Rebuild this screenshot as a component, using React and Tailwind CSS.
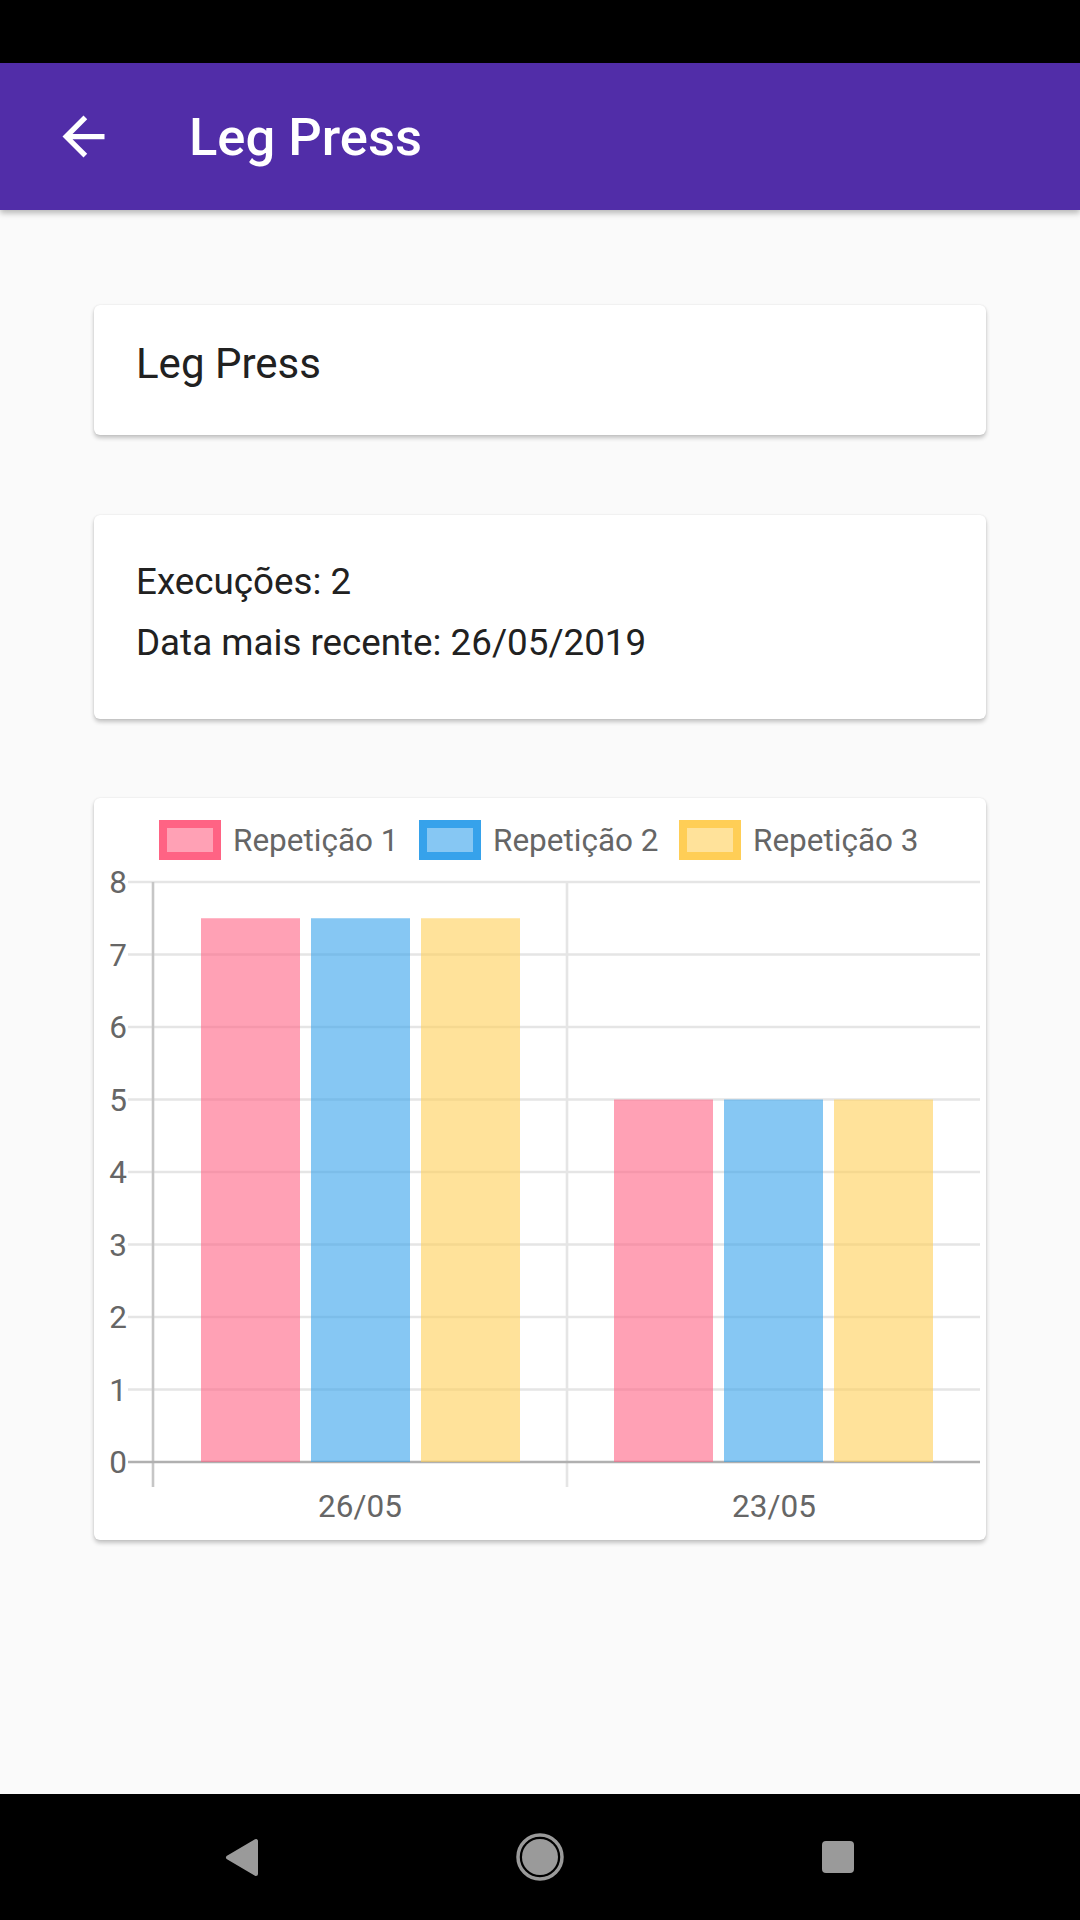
export default function App() {
  const toY = (v) => 664 - 72.5 * v;
  const groups = [
    { label: "26/05", value: 7.5, xs: [107, 217, 327], cx: 266 },
    { label: "23/05", value: 5, xs: [520, 630, 740], cx: 680 },
  ];
  const fills = ["rgba(255,99,132,0.6)", "rgba(54,162,235,0.6)", "rgba(255,206,86,0.6)"];
  const strokes = ["rgb(255,99,132)", "rgb(54,162,235)", "rgb(255,206,86)"];
  const legend = [
    { bx: 69, tx: 139, name: "Repetição 1" },
    { bx: 329, tx: 399, name: "Repetição 2" },
    { bx: 589, tx: 659, name: "Repetição 3" },
  ];
  return (
    <div className="w-[1080px] h-[1920px] flex flex-col bg-[#fafafa] overflow-hidden font-['Roboto','Noto_Sans',sans-serif]">
      <div className="h-[63px] shrink-0 bg-black" />
      <header className="relative z-10 h-[147px] shrink-0 bg-[#512da8] flex items-center shadow-[0_3px_6px_rgba(0,0,0,0.28)]">
        <svg className="ml-[52px] w-[63px] h-[63px]" viewBox="0 0 24 24">
          <path fill="#ffffff" d="M20 11H7.83l5.59-5.59L12 4l-8 8 8 8 1.41-1.41L7.83 13H20v-2z" />
        </svg>
        <h1 className="ml-[74px] text-[52.5px] font-medium text-white leading-[62px]">Leg Press</h1>
      </header>

      <main className="flex-1 flex flex-col px-[94px] pt-[95px]">
        <div className="bg-white rounded-[6px] shadow-[0_3px_4px_rgba(0,0,0,0.22),0_0_2px_rgba(0,0,0,0.1)] pl-[42px] pt-[34px] pb-[47px]">
          <p className="text-[42px] leading-[49px] text-[#212121]">Leg Press</p>
        </div>

        <div className="mt-[80px] bg-white rounded-[6px] shadow-[0_3px_4px_rgba(0,0,0,0.22),0_0_2px_rgba(0,0,0,0.1)] pl-[42px] pt-[45px] pb-[55px] flex flex-col gap-[18px]">
          <p className="text-[36.75px] leading-[43px] text-[#212121]">Execuções: 2</p>
          <p className="text-[36.75px] leading-[43px] text-[#212121]">Data mais recente: 26/05/2019</p>
        </div>

        <div className="mt-[79px] h-[742px] bg-white rounded-[6px] shadow-[0_3px_4px_rgba(0,0,0,0.22),0_0_2px_rgba(0,0,0,0.1)] overflow-hidden">
          <svg width="892" height="742" viewBox="0 0 892 742" className="block">
            {legend.map((l, i) => (
              <g key={l.name}>
                <rect x={l.bx} y={26} width={54} height={32} fill={fills[i]} stroke={strokes[i]} strokeWidth={8} />
                <text x={l.tx} y={53} fontSize="31.5" fill="#666666" fontFamily="Roboto, sans-serif">{l.name}</text>
              </g>
            ))}
            {[1, 2, 3, 4, 5, 6, 7, 8].map((v) => (
              <line key={v} x1={34} x2={886} y1={toY(v)} y2={toY(v)} stroke="#e5e5e5" strokeWidth={2.6} />
            ))}
            <line x1={59} x2={59} y1={84} y2={689} stroke="#c6c6c6" strokeWidth={2.6} />
            <line x1={473} x2={473} y1={84} y2={689} stroke="#e5e5e5" strokeWidth={2.6} />
            <line x1={34} x2={886} y1={664} y2={664} stroke="#b0b0b0" strokeWidth={2.6} />
            {[0, 1, 2, 3, 4, 5, 6, 7, 8].map((v) => (
              <text key={v} x={33} y={toY(v) + 11} fontSize="31.5" fill="#666666" textAnchor="end" fontFamily="Roboto, sans-serif">{v}</text>
            ))}
            {groups.map((g) =>
              g.xs.map((x, i) => (
                <rect key={g.label + i} x={x} y={toY(g.value)} width={99} height={72.5 * g.value} fill={fills[i]} />
              ))
            )}
            {groups.map((g) => (
              <text key={g.label} x={g.cx} y={719} fontSize="31.5" fill="#666666" textAnchor="middle" fontFamily="Roboto, sans-serif">{g.label}</text>
            ))}
          </svg>
        </div>
      </main>

      <nav className="h-[126px] shrink-0 bg-black flex items-center justify-center gap-[178px]">
        <div className="w-[120px] flex justify-center">
          <svg width="35" height="39" viewBox="0 0 35 39">
            <path d="M3 19.5 L31 3 L31 36 Z" fill="#9a9a9a" stroke="#9a9a9a" strokeWidth="4" strokeLinejoin="round" />
          </svg>
        </div>
        <div className="w-[120px] flex justify-center">
          <svg width="48" height="48" viewBox="0 0 48 48">
            <circle cx="24" cy="24" r="22" fill="none" stroke="#9a9a9a" strokeWidth="3.5" />
            <circle cx="24" cy="24" r="18" fill="#9a9a9a" />
          </svg>
        </div>
        <div className="w-[120px] flex justify-center">
          <div className="w-[32px] h-[32px] rounded-[4px] bg-[#9a9a9a]" />
        </div>
      </nav>
    </div>
  );
}
